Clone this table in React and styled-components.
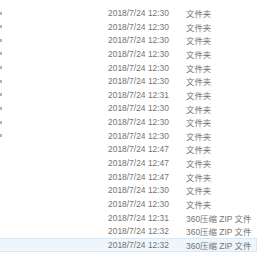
import React from 'react';
import styled, { createGlobalStyle } from 'styled-components';

const GlobalStyle = createGlobalStyle`
  html, body {
    margin: 0;
    padding: 0;
    background: #ffffff;
  }
  body {
    font-family: "Liberation Sans", "Noto Sans CJK SC", sans-serif;
  }
`;

const rows = [
  ['2018/7/24 12:30', '文件夹', true],
  ['2018/7/24 12:30', '文件夹', true],
  ['2018/7/24 12:30', '文件夹', true],
  ['2018/7/24 12:30', '文件夹', true],
  ['2018/7/24 12:30', '文件夹', true],
  ['2018/7/24 12:30', '文件夹', true],
  ['2018/7/24 12:31', '文件夹', true],
  ['2018/7/24 12:30', '文件夹', true],
  ['2018/7/24 12:30', '文件夹', true],
  ['2018/7/24 12:30', '文件夹', true],
  ['2018/7/24 12:47', '文件夹', false],
  ['2018/7/24 12:47', '文件夹', false],
  ['2018/7/24 12:47', '文件夹', false],
  ['2018/7/24 12:30', '文件夹', false],
  ['2018/7/24 12:30', '文件夹', false],
  ['2018/7/24 12:31', '360压缩 ZIP 文件', false],
  ['2018/7/24 12:32', '360压缩 ZIP 文件', false],
  ['2018/7/24 12:32', '360压缩 ZIP 文件', false],
];

const List = styled.div`
  width: 260px;
  height: 260px;
  padding-top: 6.2px;
  box-sizing: border-box;
  overflow: hidden;
  display: flex;
  flex-direction: column;
`;

const Row = styled.div`
  display: flex;
  align-items: center;
  height: 13.65px;
  width: 257px;
  box-sizing: border-box;
  border: 1px solid ${p => (p.$hover ? '#d8e7f4' : 'transparent')};
  border-left: none;
  background: ${p => (p.$hover ? '#eef6fc' : 'transparent')};
  font-size: 8.45px;
  color: #747474;
  white-space: nowrap;
`;

const Stub = styled.span`
  width: 108px;
  flex: none;
  display: flex;
  align-items: center;
`;

const Mark = styled.i`
  display: block;
  width: 2px;
  height: 3px;
  background: ${p => (p.$on ? '#aab5c0' : 'transparent')};
`;

const DateCell = styled.span`
  width: 78px;
  flex: none;
`;

const TypeCell = styled.span`
  flex: 1;
`;

export default function App() {
  return (
    <>
      <GlobalStyle />
      <List>
        {rows.map(([date, type, mark], i) => (
          <Row key={i} $hover={i === rows.length - 1}>
            <Stub><Mark $on={mark} /></Stub>
            <DateCell>{date}</DateCell>
            <TypeCell>{type}</TypeCell>
          </Row>
        ))}
      </List>
    </>
  );
}
